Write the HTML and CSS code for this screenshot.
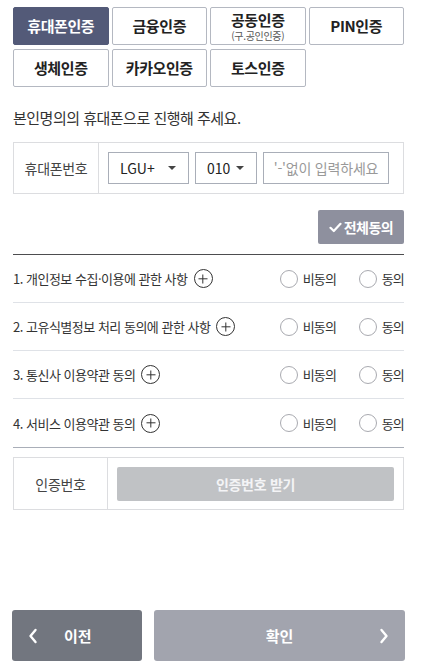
FILE: index.html
```html
<!DOCTYPE html>
<html lang="ko">
<head>
<meta charset="utf-8">
<link rel="stylesheet" href="styles.css">
</head>
<body>
<div class="page">
  <div class="tabs">
    <button class="tab active">휴대폰인증</button>
    <button class="tab">금융인증</button>
    <button class="tab two"><span class="main">공동인증</span><span class="sub">(구.공인인증)</span></button>
    <button class="tab">PIN인증</button>
    <button class="tab">생체인증</button>
    <button class="tab">카카오인증</button>
    <button class="tab">토스인증</button>
  </div>

  <p class="guide">본인명의의 휴대폰으로 진행해 주세요.</p>

  <div class="box phone">
    <div class="label">휴대폰번호</div>
    <div class="fields">
      <div class="select carrier"><span>LGU+</span><i class="caret"></i></div>
      <div class="select prefix"><span>010</span><i class="caret"></i></div>
      <div class="input">'-'없이 입력하세요</div>
    </div>
  </div>

  <div class="allrow">
    <button class="all"><svg class="chk" width="13" height="11" viewBox="0 0 13 11"><path d="M1.5 5.8 L4.8 9 L11.5 1.8" fill="none" stroke="#fff" stroke-width="2.2" stroke-linecap="round" stroke-linejoin="round"/></svg>전체동의</button>
  </div>

  <div class="terms">
    <div class="term">
      <span class="ttl">1. 개인정보 수집·이용에 관한 사항</span>
      <span class="plus"></span>
      <span class="opts"><span class="opt"><i class="radio"></i>비동의</span><span class="opt"><i class="radio"></i>동의</span></span>
    </div>
    <div class="term">
      <span class="ttl">2. 고유식별정보 처리 동의에 관한 사항</span>
      <span class="plus"></span>
      <span class="opts"><span class="opt"><i class="radio"></i>비동의</span><span class="opt"><i class="radio"></i>동의</span></span>
    </div>
    <div class="term">
      <span class="ttl">3. 통신사 이용약관 동의</span>
      <span class="plus"></span>
      <span class="opts"><span class="opt"><i class="radio"></i>비동의</span><span class="opt"><i class="radio"></i>동의</span></span>
    </div>
    <div class="term">
      <span class="ttl">4. 서비스 이용약관 동의</span>
      <span class="plus"></span>
      <span class="opts"><span class="opt"><i class="radio"></i>비동의</span><span class="opt"><i class="radio"></i>동의</span></span>
    </div>
  </div>

  <div class="box auth">
    <div class="label">인증번호</div>
    <div class="fields">
      <button class="getnum">인증번호 받기</button>
    </div>
  </div>

  <div class="bottom">
    <button class="prev"><svg width="10" height="16" viewBox="0 0 10 16"><path d="M7.5 2 L2.5 8 L7.5 14" fill="none" stroke="#fff" stroke-width="2.4" stroke-linecap="round" stroke-linejoin="round"/></svg><span>이전</span></button>
    <button class="next"><span>확인</span><svg width="10" height="16" viewBox="0 0 10 16"><path d="M2.5 2 L7.5 8 L2.5 14" fill="none" stroke="#fff" stroke-width="2.4" stroke-linecap="round" stroke-linejoin="round"/></svg></button>
  </div>
</div>
</body>
</html>
```

FILE: styles.css
```css
* { box-sizing: border-box; }
html, body { margin: 0; padding: 0; background: #fff; }
body {
  font-family: "Noto Sans CJK KR", "Noto Sans", sans-serif;
  color: #333;
  width: 434px;
  height: 670px;
  overflow: hidden;
}
button { font-family: inherit; cursor: pointer; }
.page {
  width: 391px;
  margin-left: 13px;
  padding-top: 7px;
  display: flex;
  flex-direction: column;
}
.tabs {
  display: grid;
  grid-template-columns: repeat(4, 1fr);
  grid-auto-rows: 38px;
  gap: 4px 3px;
}
.tab {
  margin: 0;
  padding: 0;
  background: #fff;
  border: 1px solid #b4b8c1;
  border-radius: 2px;
  font-size: 15px;
  font-weight: 700;
  color: #222;
  letter-spacing: -0.4px;
  display: flex;
  flex-direction: column;
  align-items: center;
  justify-content: center;
  line-height: 18px;
}
.tab.active { background: #535a78; border-color: #535a78; color: #fff; }
.tab.two { padding-top: 0; }
.tab .main { line-height: 15px; }
.tab .sub { font-size: 10px; font-weight: 400; color: #555; line-height: 11px; letter-spacing: -0.3px; margin-top: 3px; }
.guide {
  margin: 21px 0 0;
  font-size: 15px;
  line-height: 20px;
  letter-spacing: -0.5px;
  color: #333;
}
.box {
  display: flex;
  border: 1px solid #dcdde0;
}
.box .label {
  border-right: 1px solid #dcdde0;
  display: flex;
  align-items: center;
  justify-content: center;
  font-size: 14px;
  color: #444;
  letter-spacing: -0.3px;
}
.phone { margin-top: 14px; height: 52px; }
.phone .label { width: 85px; }
.phone .fields {
  flex: 1;
  display: flex;
  align-items: center;
  gap: 6px;
  padding: 0 14px 0 9px;
}
.select, .input {
  height: 32px;
  border: 1px solid #a9aeb8;
  display: flex;
  align-items: center;
  font-size: 14px;
  color: #222;
}
.select { padding: 0 12px 0 11px; justify-content: space-between; }
.carrier { width: 81px; }
.prefix { width: 62px; }
.caret {
  width: 0; height: 0;
  border-left: 4px solid transparent;
  border-right: 4px solid transparent;
  border-top: 4px solid #444;
}
.input {
  flex: 1;
  justify-content: center;
  color: #999;
  letter-spacing: -0.2px;
}
.allrow { display: flex; justify-content: flex-end; margin-top: 16px; }
.all {
  width: 86px;
  height: 34px;
  border: none;
  border-radius: 2px;
  background: #8e909e;
  color: #fff;
  font-size: 14px;
  font-weight: 700;
  letter-spacing: -0.5px;
  display: flex;
  align-items: center;
  justify-content: center;
  gap: 2px;
  padding: 0;
}
.terms {
  margin-top: 10px;
  border-top: 1px solid #4d4d4f;
  border-bottom: 1px solid #a9aeb8;
}
.term {
  height: 48px;
  display: flex;
  align-items: center;
  border-bottom: 1px solid #dfe2e7;
  font-size: 13px;
  color: #333;
}
.term:last-child { border-bottom: none; }
.ttl { letter-spacing: -0.5px; }
.plus {
  width: 19px; height: 19px;
  border: 1.3px solid #333;
  border-radius: 50%;
  margin-left: 6px;
  position: relative;
}
.plus::before, .plus::after {
  content: "";
  position: absolute;
  background: #333;
  left: 50%; top: 50%;
}
.plus::before { width: 9px; height: 1.4px; transform: translate(-50%, -50%); }
.plus::after { width: 1.4px; height: 9px; transform: translate(-50%, -50%); }
.opts { margin-left: auto; display: flex; gap: 0; }
.opt { display: flex; align-items: center; letter-spacing: -0.8px; }
.opt:first-child { width: 79px; }
.radio {
  width: 18px; height: 18px;
  border: 1px solid #a9aab0;
  border-radius: 50%;
  margin-right: 5px;
  background: #fff;
}
.auth { margin-top: 9px; height: 53px; }
.auth .label { width: 94px; }
.auth .fields { flex: 1; display: flex; align-items: center; padding: 0 9px; }
.getnum {
  width: 100%;
  height: 34px;
  border: none;
  border-radius: 2px;
  background: #c0c2c5;
  color: #f4f4f6;
  font-size: 14px;
  font-weight: 700;
  letter-spacing: -0.3px;
}
.bottom {
  margin-top: 100px;
  display: flex;
  gap: 12px;
  margin-left: -1px;
  width: 393px;
}
.prev, .next {
  height: 51px;
  border: none;
  border-radius: 3px;
  color: #fff;
  font-size: 15px;
  font-weight: 700;
  display: flex;
  align-items: center;
  padding: 0;
}
.prev { width: 130px; background: #72767f; padding-left: 16px; }
.prev span { margin-left: 26px; }
.next { flex: 1; background: #a2a4ae; justify-content: center; position: relative; }
.next svg { position: absolute; right: 16px; top: 18px; }
```
